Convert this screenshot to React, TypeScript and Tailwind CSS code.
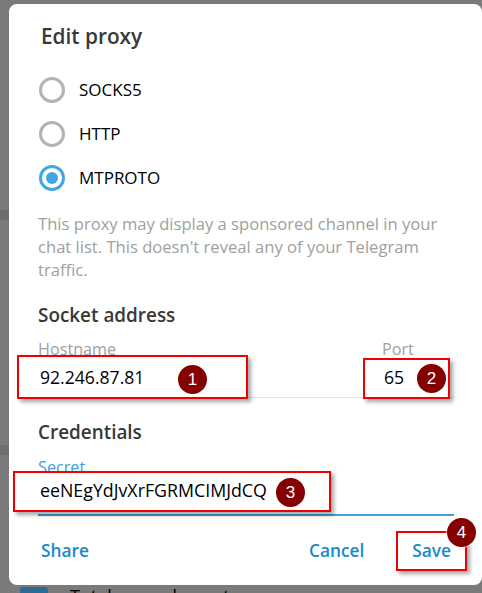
import React from "react";

const font = { fontFamily: "'Open Sans', 'Noto Sans', sans-serif" };

function Radio({ label, checked }: { label: string; checked?: boolean }) {
  return (
    <div className="flex h-[44px] items-center gap-[14px] pl-px">
      <span
        className={
          checked
            ? "flex h-[26px] w-[26px] items-center justify-center rounded-full border-[3px] border-[#40a7e3]"
            : "flex h-[26px] w-[26px] items-center justify-center rounded-full border-[3px] border-[#b3b3b3]"
        }
      >
        {checked && <span className="h-[12px] w-[12px] rounded-full bg-[#40a7e3]" />}
      </span>
      <span className="text-[17px] text-black">{label}</span>
    </div>
  );
}

function Marker({ n, className }: { n: string; className: string }) {
  return (
    <span
      className={
        "absolute flex h-[29px] w-[29px] items-center justify-center rounded-full bg-[#850000] text-[17px] leading-none text-white shadow-[0_0_0_1px_rgba(255,255,255,0.6)] " +
        className
      }
      style={{ fontFamily: "'Liberation Sans', Arial, sans-serif" }}
    >
      {n}
    </span>
  );
}

function Box({ className }: { className: string }) {
  return (
    <span
      className={
        "pointer-events-none absolute border-2 border-[#f00000] shadow-[3px_3px_4px_rgba(0,0,0,0.35)] " +
        className
      }
    />
  );
}

export default function App() {
  return (
    <div className="relative h-[593px] w-[482px] overflow-hidden bg-[#7a7a7a]" style={font}>
      {/* dimmed window behind the dialog */}
      <div className="flex h-full w-[9px] flex-col">
        <div className="h-[210px]" />
        <div className="h-[10px] bg-[#6e6e6e]" />
        <div className="h-[225px]" />
        <div className="h-[10px] bg-[#6e6e6e]" />
      </div>
      <div className="absolute left-0 top-[584px] flex items-start gap-[22px] pl-[20px]">
        <span className="mt-[3px] h-[28px] w-[28px] rounded-[3px] bg-[#2f6a94]" />
        <span className="text-[18px] leading-[24px] text-black">Total unread count</span>
      </div>

      {/* dialog */}
      <div className="absolute left-[9px] top-[4px] h-[581px] w-[473px] rounded-[8px] bg-white">
        <div className="flex flex-col pl-[29px] pr-[28px] pt-[18px]">
          <h1 className="pl-[3px] text-[20.8px] font-semibold leading-[28px] text-[#383838]">Edit proxy</h1>

          <div className="mt-[18px] flex flex-col">
            <Radio label="SOCKS5" />
            <Radio label="HTTP" />
            <Radio label="MTPROTO" checked />
          </div>

          <p className="mt-[12px] text-[16.6px] leading-[23px] text-[#a0a0a0]">
            This proxy may display a sponsored channel in your chat list. This doesn't reveal any of your
            Telegram traffic.
          </p>

          <h2 className="mt-[22px] text-[18.9px] font-semibold leading-[24px] text-[#383838]">Socket address</h2>

          <div className="mt-[12px] flex gap-[12px]">
            <div className="flex flex-1 flex-col border-b border-[#e4e4e4] pb-[8px]">
              <span className="text-[16.2px] leading-[20px] text-[#a0a0a0]">Hostname</span>
              <span className="mt-[6px] pl-[2px] text-[17.6px] leading-[24px] text-black">92.246.87.81</span>
            </div>
            <div className="flex w-[72px] flex-col border-b border-[#e4e4e4] pb-[8px]">
              <span className="text-[16.2px] leading-[20px] text-[#a0a0a0]">Port</span>
              <span className="mt-[6px] pl-[2px] text-[17.6px] leading-[24px] text-black">65</span>
            </div>
          </div>

          <h2 className="mt-[22px] text-[18.9px] font-semibold leading-[24px] text-[#383838]">Credentials</h2>

          <div className="mt-[13px] flex flex-col border-b-2 border-[#3fa0dc] pb-[12px]">
            <span className="text-[16.2px] leading-[20px] text-[#40a0dc]">Secret</span>
            <span className="mt-px pl-[2px] text-[17.8px] leading-[24px] text-black">eeNEgYdJvXrFGRMCIMJdCQ</span>
          </div>

          <div className="mt-[17px] flex h-[36px] items-center px-[3px] text-[17.3px] font-semibold text-[#168acd]">
            <span>Share</span>
            <span className="ml-auto">Cancel</span>
            <span className="ml-[48px]">Save</span>
          </div>
        </div>

        {/* annotations */}
        <Box className="left-[8px] top-[351px] h-[44px] w-[231px]" />
        <Box className="left-[354px] top-[354px] h-[41px] w-[87px]" />
        <Box className="left-[4px] top-[467px] h-[41px] w-[318px]" />
        <Box className="left-[387px] top-[527px] h-[40px] w-[71px]" />
        <Marker n="1" className="left-[169px] top-[361px]" />
        <Marker n="2" className="left-[408px] top-[360px]" />
        <Marker n="3" className="left-[267px] top-[474px]" />
        <Marker n="4" className="left-[438px] top-[514px]" />
      </div>
    </div>
  );
}
